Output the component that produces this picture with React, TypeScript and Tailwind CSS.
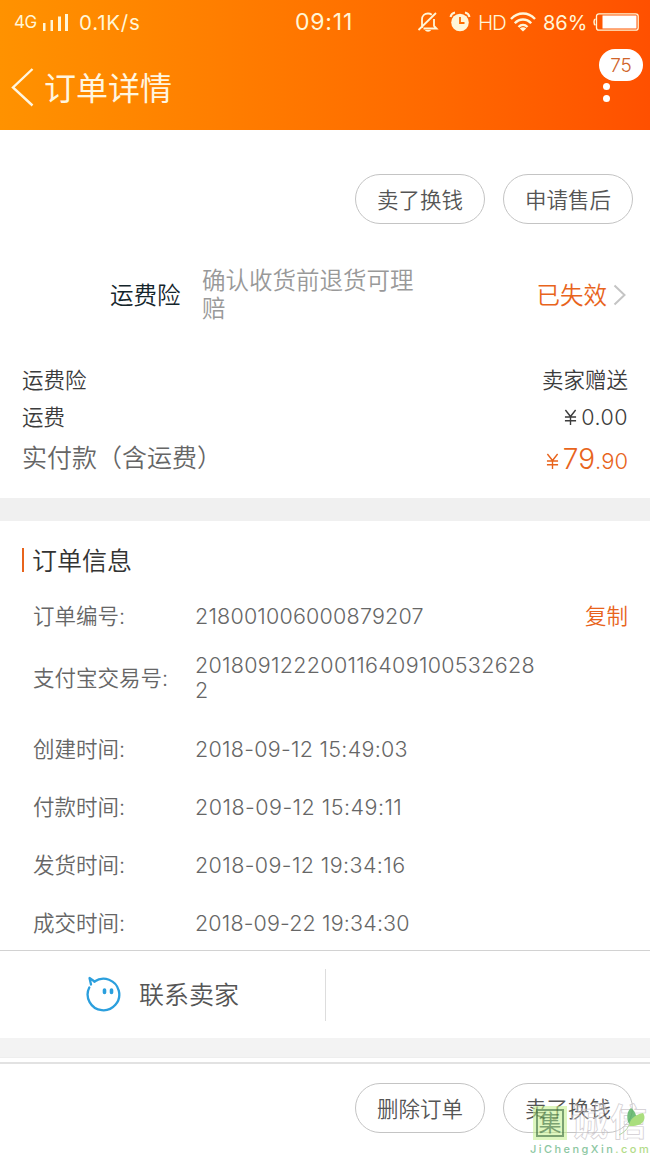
import type { ReactNode } from 'react'

const costs = [
  { label: '运费险', value: '卖家赠送', height: 'h-[38px]' },
  { label: '运费', value: '¥0.00', height: 'h-9' },
]

const times = [
  { label: '创建时间:', value: '2018-09-12 15:49:03', tracking: 'tracking-[0.28px]' },
  { label: '付款时间:', value: '2018-09-12 15:49:11', tracking: 'tracking-[0.48px]' },
  { label: '发货时间:', value: '2018-09-12 19:34:16', tracking: 'tracking-[0.4px]' },
  { label: '成交时间:', value: '2018-09-22 19:34:30', tracking: 'tracking-[0.15px]' },
]

function PillButton({ children }: { children: ReactNode }) {
  return (
    <button className="h-[50px] w-[130px] rounded-full border border-[#c4c4c4] pt-0.5 text-[21.5px] font-[350] whitespace-nowrap text-[#555]">
      {children}
    </button>
  )
}

function Yen({ className }: { className: string }) {
  return (
    <svg className={className} viewBox="0 0 14 17" fill="none" stroke="currentColor" strokeWidth="1.5">
      <path d="M1.5 1 7 8l5.5-7M7 8v9M1 8.5h12M1 12.5h12" />
    </svg>
  )
}

function StatusBar() {
  return (
    <div className="relative flex h-11 items-center text-[20px] leading-none text-[#fff6d8]">
      <span className="ml-3.5 w-[23px] text-[17px] tracking-[-0.5px]">4G</span>
      <svg className="ml-1.5 h-5 w-[27px]" viewBox="0 0 27 20" fill="currentColor">
        <path d="M0 11h2.500v8H0zM7.500 8H10v11H7.500zM15 4.500h3V19h-3zM22 2h3v17h-3z" />
      </svg>
      <span className="ml-[9px] pt-0.5 text-[20.5px] tracking-[0.8px]">0.1K/s</span>
      <span className="absolute top-[11px] left-[295px] text-[23px] tracking-[0.8px]">09:11</span>
      <div className="ml-auto flex items-center">
        <svg className="h-[22px] w-[22px]" viewBox="0 0 22 22" fill="none" stroke="currentColor" strokeWidth="1.8">
          <path d="M5 17V8.500C5 5 7.500 2.500 11 2.500c1.500 0 2.800.5 3.800 1.300M17 8v7l2.500 2.500H6.500M1.500 19 19 2" />
          <path d="M8 19h6c-.5 2.200-5.500 2.200-6 0z" fill="currentColor" stroke="none" />
        </svg>
        <svg className="ml-2.5 h-[22px] w-[22px]" viewBox="0 0 22 22">
          <circle cx="11" cy="11.5" r="8.8" fill="currentColor" />
          <path d="M1.500 6C2 3.500 3.500 2 6 1.500M20.500 6C20 3.500 18.500 2 16 1.500" fill="none" stroke="currentColor" strokeWidth="2" />
          <path d="M11 6v6h4.500" fill="none" stroke="#ff6c00" strokeWidth="1.8" />
        </svg>
        <span className="ml-[7px] w-[26px] pt-0.5 text-[20.5px] font-[350] tracking-[-1.2px]">HD</span>
        <svg className="ml-1.5 h-5 w-[26px]" viewBox="0 0 26 20" fill="none" stroke="currentColor" strokeWidth="2.4">
          <path d="M1 7C8-.3 18-.3 25 7M4.800 11.200c4.700-5 11.700-5 16.400 0M8.500 15c2.700-2.800 6.300-2.800 9 0" />
          <path d="M9.800 16.500c2-1.700 4.400-1.700 6.400 0L13 19.500z" fill="currentColor" stroke="none" />
        </svg>
        <span className="ml-[7px] w-11 pt-0.5 text-[20px]">86%</span>
        <svg className="mr-[11px] ml-1.5 h-[18px] w-[46px]" viewBox="0 0 46 18">
          <path d="M2.500 6C.5 6.500.5 11.500 2.500 12" fill="none" stroke="currentColor" strokeWidth="1.5" />
          <rect x="3.5" y=".8" width="41.7" height="16.4" rx="2.5" fill="none" stroke="currentColor" strokeWidth="1.3" />
          <rect x="9.5" y="2.5" width="34" height="13" fill="#fff" />
        </svg>
      </div>
    </div>
  )
}

function Header() {
  return (
    <header className="relative h-[130px] bg-linear-to-r from-[#ff9200] to-[#ff5000]">
      <StatusBar />
      <div className="flex h-[86px] items-center text-[#fff6e0]">
        <svg className="ml-[11px] h-10 w-[23px]" viewBox="0 0 23 40" fill="none" stroke="currentColor" strokeWidth="2.4">
          <path d="M21.500 2 2 20.500l19.500 18" />
        </svg>
        <h1 className="ml-2.5 pt-[3px] text-[32px] font-normal">订单详情</h1>
      </div>
      <div className="absolute top-[49px] right-[7px] flex h-8 w-11 items-center justify-center rounded-full bg-white pt-0.5 text-[19px] font-[350] text-[#d0642a]">
        75
      </div>
      <div className="absolute top-[83px] right-10 flex flex-col gap-[5px]">
        <i className="size-[7px] rounded-full bg-white" />
        <i className="size-[7px] rounded-full bg-white" />
      </div>
    </header>
  )
}

function Watermark() {
  return (
    <div className="absolute top-[1106px] left-[530px] w-[120px] opacity-80">
      <div className="flex h-[34px] items-center">
        <div className="ml-[3px] flex size-[34px] items-center justify-center bg-[#c3f08c]/70">
          <span className="flex size-7 items-center justify-center border-2 border-[#5b8c4f] text-[23px] leading-none text-[#5b8c4f]">
            集
          </span>
        </div>
        <span className="ml-1 text-[37px] leading-[34px] font-bold tracking-[2px] whitespace-nowrap text-white/40 [-webkit-text-stroke:0.7px_#c6c0c6]">
          诚信
        </span>
      </div>
      <svg className="absolute top-0 left-[86px] h-8 w-8" viewBox="0 0 32 32">
        <path d="M13 18C10 12 11 5 15 2c5 4 7 10 4 15z" fill="#4fae5b" />
        <path d="M13 20c1-7 5-11 14-13 4 6 0 14-14 13z" fill="#95d65e" />
        <path d="M13 19c-2 5-6 8-10 10" fill="none" stroke="#9fc98c" />
      </svg>
      <div className="mt-[3px] text-[11px] leading-3 font-medium tracking-[2.45px] whitespace-nowrap text-[#6fb98a]">
        JiChengXin<span className="text-[#9fd46c]">.com</span>
      </div>
    </div>
  )
}

export default function App() {
  return (
    <div className="relative h-[1155px] w-[650px] overflow-hidden bg-white font-['Inter','Noto_Sans_CJK_SC',sans-serif]">
      <Header />

      <section className="h-[368px]">
        <div className="flex justify-end gap-[18px] pt-11 pr-[17px]">
          <PillButton>卖了换钱</PillButton>
          <PillButton>申请售后</PillButton>
        </div>

        <div className="mt-[43px] flex h-14 items-center">
          <span className="ml-[110px] w-[92px] pt-0.5 text-[23.5px] font-[350] text-[#14252b]">运费险</span>
          <p className="w-[220px] text-[23.5px] leading-7 font-[350] text-[#999]">确认收货前退货可理赔</p>
          <span className="ml-auto pt-0.5 text-[23.5px] font-[350] text-[#e8641c]">已失效</span>
          <svg className="mr-6 ml-1.5 h-[22px] w-[13px]" viewBox="0 0 13 22" fill="none" stroke="#c4c4c4" strokeWidth="2">
            <path d="m1.500 1.500 10 9.500-10 9.500" />
          </svg>
        </div>

        <div className="mt-[38px] px-[22px] text-[#3c3c3c]">
          {costs.map((cost) => (
            <div key={cost.label} className={`flex items-center justify-between text-[21.5px] font-[350] ${cost.height}`}>
              <span>{cost.label}</span>
              {cost.value.startsWith('¥') ? (
                <span className="flex items-center tracking-[0.5px]">
                  <Yen className="mr-1 h-4 w-[13px]" />
                  {cost.value.slice(1)}
                </span>
              ) : (
                <span>{cost.value}</span>
              )}
            </div>
          ))}
          <div className="flex h-12 items-center justify-between">
            <span className="text-[25px] font-[350] text-[#666]">实付款（含运费）</span>
            <span className="flex items-baseline text-[#e8641c]">
              <Yen className="mr-1 h-4 w-[13px]" />
              <span className="text-[28px] font-[350]">79</span>
              <span className="text-[22px] font-[350]">.90</span>
            </span>
          </div>
        </div>
      </section>

      <div className="h-[23px] bg-[#f0f0f0]" />

      <section className="h-[429px] pt-[21px]">
        <div className="flex h-9 items-center pl-[22px]">
          <i className="h-6 w-[2px] bg-[#e8641c]" />
          <h2 className="ml-2 pt-[3px] text-[25px] font-[350] text-[#333]">订单信息</h2>
        </div>
        <div className="pr-[22px] pl-[33px] text-[21.5px] font-[350] text-[#666]">
          <div className="mt-[9px] flex h-[58px] items-center">
            <span className="w-[162px]">订单编号:</span>
            <span className="tracking-[0.2px]">218001006000879207</span>
            <span className="ml-auto text-[#e8641c]">复制</span>
          </div>
          <div className="mt-[3px] flex h-[60px] items-center">
            <span className="w-[162px]">支付宝交易号:</span>
            <span className="w-[350px] leading-[25px] tracking-[0.3px]">
              201809122200116409100532628
              <br />2
            </span>
          </div>
          <div className="mt-3">
            {times.map((time) => (
              <div key={time.label} className="flex h-[58px] items-center">
                <span className="w-[162px]">{time.label}</span>
                <span className={time.tracking}>{time.value}</span>
              </div>
            ))}
          </div>
        </div>
      </section>

      <div className="flex h-[88px] items-center border-t border-[#d2d2d2]">
        <div className="flex h-[52px] w-[326px] items-center border-r border-[#ddd]">
          <svg className="mb-0.5 ml-[86px] h-9 w-9" viewBox="0 0 36 36" fill="none" stroke="#2b9fdd" strokeWidth="2.3" strokeLinecap="round" strokeLinejoin="round">
            <path d="M8.500 5.500A15.800 15.800 0 1 1 3.300 11.500" />
            <path d="M5 8.500 3.500 2l5 3.500" />
            <path d="M18.500 14v2.500M25.500 14v2.500" strokeWidth="3.6" />
          </svg>
          <span className="ml-[17px] pt-[3px] text-[25px] font-[350] text-[#555]">联系卖家</span>
        </div>
      </div>

      <div className="h-[19px] bg-[#f3f3f3]" />
      <div className="h-[5px] border-t border-[#eee]" />
      <footer className="flex h-[93px] justify-end gap-[18px] border-t-2 border-[#e2e2e2] pt-[19px] pr-[17px]">
        <PillButton>删除订单</PillButton>
        <PillButton>卖了换钱</PillButton>
      </footer>

      <Watermark />
    </div>
  )
}
